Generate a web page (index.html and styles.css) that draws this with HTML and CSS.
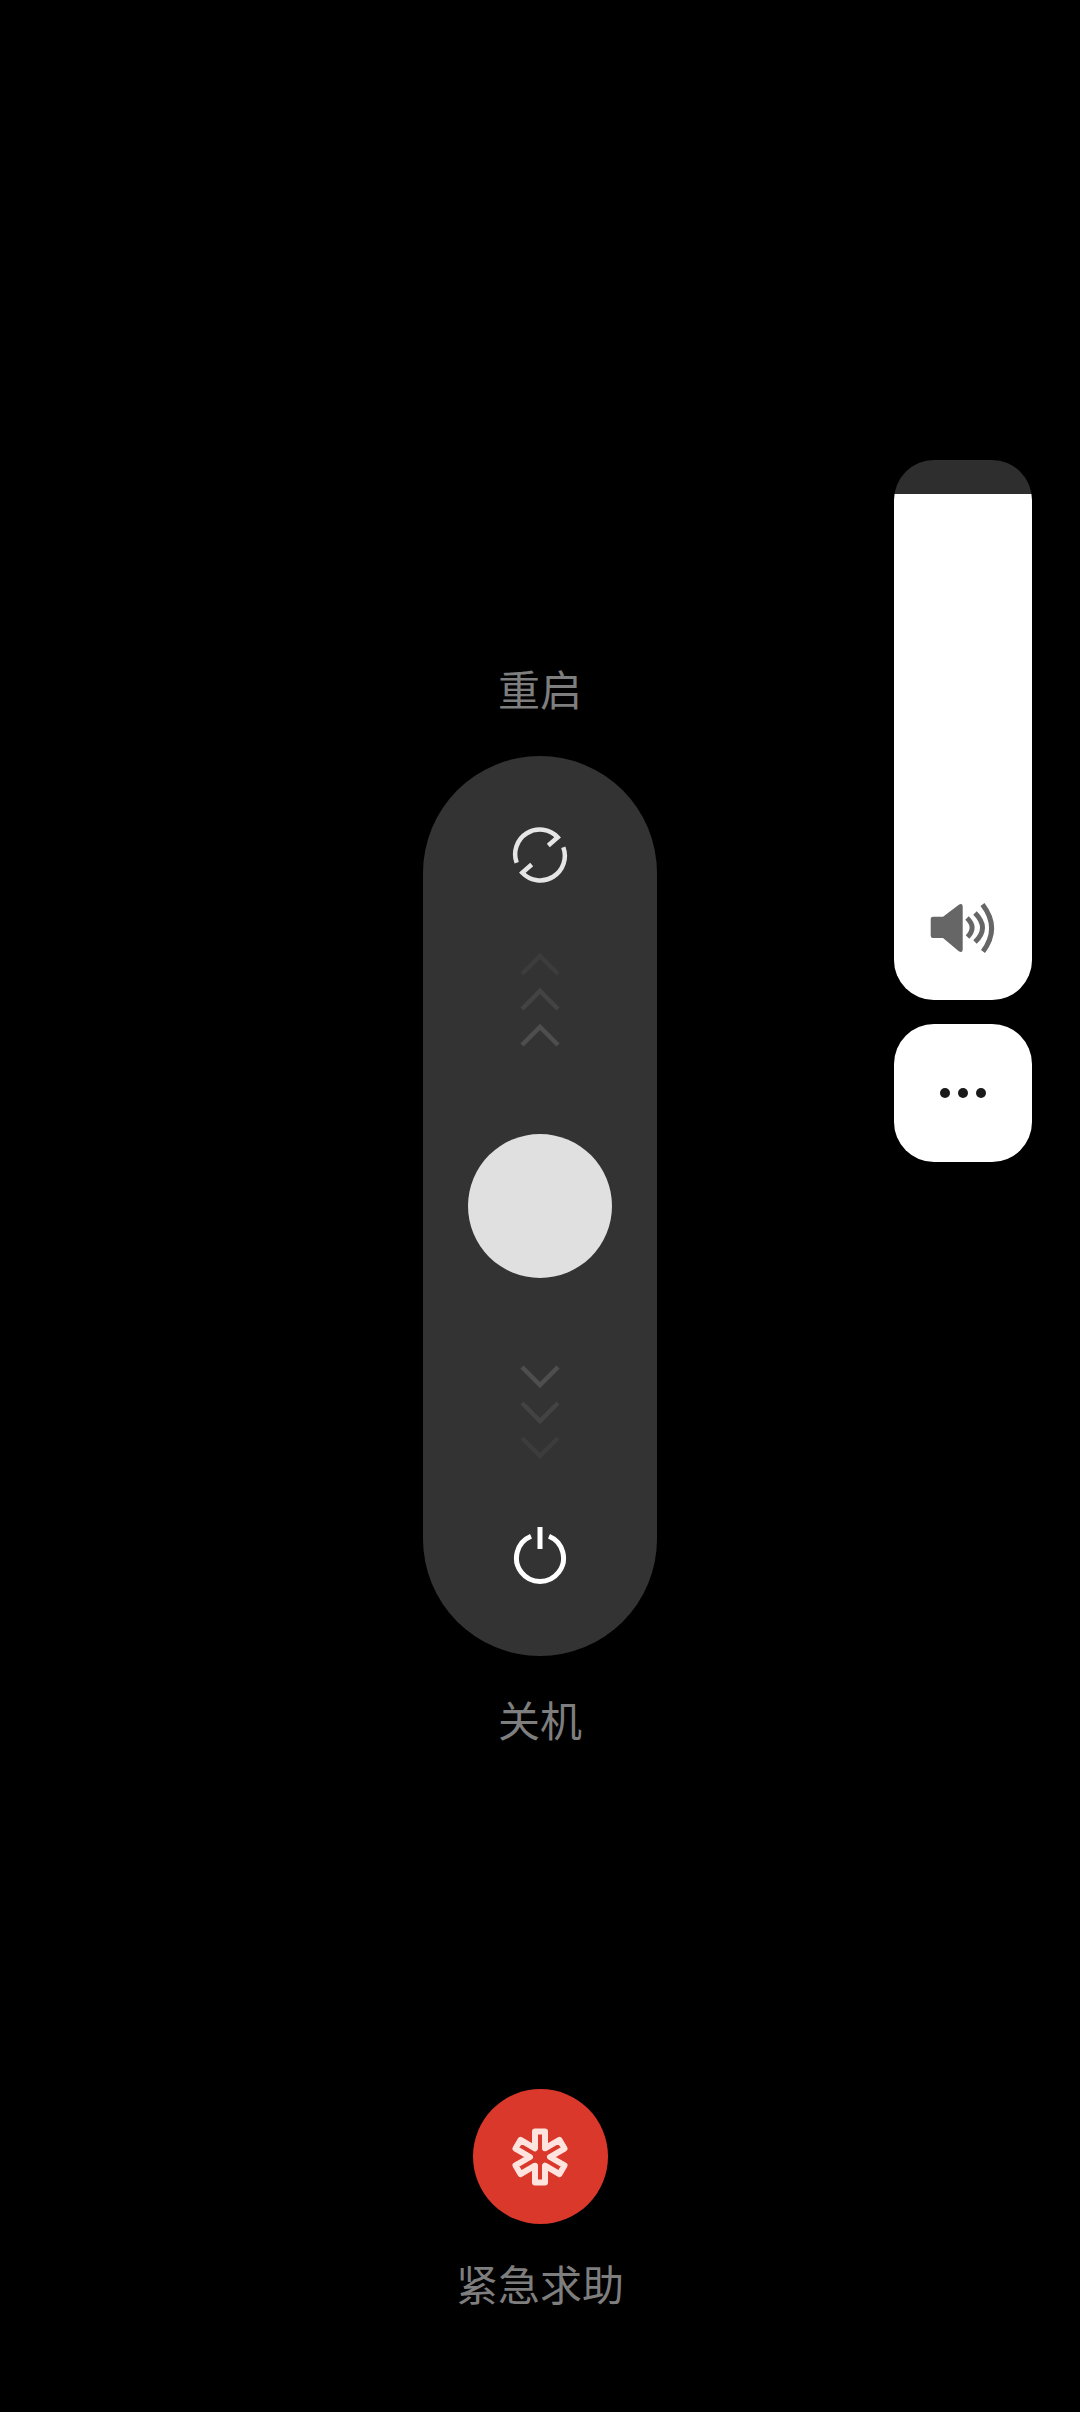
FILE: index.html
```html
<!DOCTYPE html>
<html lang="zh">
<head>
<meta charset="utf-8">
<title>电源菜单</title>
<link rel="stylesheet" href="styles.css">
</head>
<body>
<main class="screen">
  <section class="center">
    <div class="label label-top">重启</div>
    <div class="pill">
      <svg class="icon icon-restart" viewBox="0 0 56 56" width="56" height="56">
        <path class="ring" d="M4.7 35.7A24.600 24.600 0 0 1 45.700 10.300L36.300 18.500"/>
        <path class="ring" d="M51.300 20.300A24.600 24.600 0 0 1 10.300 45.700L19.700 37.500"/>
      </svg>
      <svg class="chevrons chev-up" viewBox="0 0 40 94" width="40" height="94">
        <path class="c1" d="M2 21L20 3L38 21"/>
        <path class="c2" d="M2 56L20 38L38 56"/>
        <path class="c3" d="M2 92L20 74L38 92"/>
      </svg>
      <div class="knob"></div>
      <svg class="chevrons chev-down" viewBox="0 0 40 94" width="40" height="94">
        <path class="c3" d="M2 2L20 20L38 2"/>
        <path class="c2" d="M2 38L20 56L38 38"/>
        <path class="c1" d="M2 73L20 91L38 73"/>
      </svg>
      <svg class="icon icon-power" viewBox="0 0 56 60" width="56" height="60">
        <path class="power" d="M19 10.300A23.500 23.500 0 1 0 37 10.300"/>
        <path class="power" d="M28 1V23"/>
      </svg>
    </div>
    <div class="label label-bottom">关机</div>
    <div class="sos">
      <svg viewBox="0 0 60 64" width="60" height="64">
        <path class="star" d="M25 6.500H35V23.300L49.500 14.900L54.500 23.600L40 32L54.500 40.400L49.500 49.100L35 40.700V57.500H25V40.700L10.500 49.100L5.500 40.400L20 32L5.500 23.600L10.500 14.900L25 23.300Z"/>
      </svg>
    </div>
    <div class="label label-sos">紧急求助</div>
  </section>
  <aside class="side">
    <div class="volume">
      <div class="volume-fill">
        <svg viewBox="0 0 68 54" width="68" height="54">
          <path class="speaker" d="M4 15.700H14L29.500 4Q33.700 1.500 33.700 6V48Q33.700 52.500 29.500 50L14 37H4Q1.700 37 1.700 34.500V18Q1.700 15.700 4 15.700Z"/>
          <path class="wave" d="M38 17Q48 26.500 38.500 36"/>
          <path class="wave" d="M46 12Q61 27 46 41"/>
          <path class="wave" d="M53.500 3.500Q71.500 27 54 50.500"/>
        </svg>
      </div>
    </div>
    <div class="more">
      <span class="dot"></span><span class="dot"></span><span class="dot"></span>
    </div>
  </aside>
</main>
</body>
</html>
```
FILE: styles.css
```css
* { box-sizing: border-box; }
html, body { margin: 0; padding: 0; background: #000; }
.screen {
  width: 1080px;
  height: 2412px;
  display: grid;
  grid-template-columns: 423px 234px 1fr;
  background: #000;
  overflow: hidden;
}
.center {
  grid-column: 2;
  display: flex;
  flex-direction: column;
  align-items: center;
  padding-top: 658px;
}
.label {
  font-family: "Noto Sans CJK SC", "Noto Sans", sans-serif;
  font-weight: 400;
  font-size: 42px;
  line-height: 60px;
  color: #7e7e7e;
  white-space: nowrap;
}
.label-top { margin-bottom: 38px; }
.label-bottom { margin-top: 33px; }
.label-sos { margin-top: 29px; }
.pill {
  width: 234px;
  height: 900px;
  border-radius: 117px;
  background: #333;
  display: flex;
  flex-direction: column;
  align-items: center;
  padding-top: 71px;
}
.icon, .chevrons { display: block; flex: none; }
.ring { fill: none; stroke: #e6e6e6; stroke-width: 4.5; }
.power { fill: none; stroke: #fff; stroke-width: 5; }
.chevrons { fill: none; stroke-width: 4.5; }
.c1 { stroke: #3c3c3c; }
.c2 { stroke: #434343; }
.c3 { stroke: #4e4e4e; }
.chev-up { margin-top: 70px; }
.knob {
  width: 144px;
  height: 144px;
  border-radius: 50%;
  background: #e0e0e0;
  margin-top: 87px;
  flex: none;
}
.chev-down { margin-top: 87px; }
.icon-power { margin-top: 67px; }
.sos {
  width: 135px;
  height: 135px;
  border-radius: 50%;
  background: #da382b;
  margin-top: 340px;
  display: flex;
  align-items: center;
  justify-content: center;
  flex: none;
}
.star { fill: none; stroke: #ffe3df; stroke-width: 6; stroke-linejoin: round; }
.side {
  grid-column: 3;
  display: flex;
  flex-direction: column;
  align-items: flex-end;
  padding: 460px 48px 0 0;
  gap: 24px;
}
.volume {
  width: 138px;
  height: 540px;
  border-radius: 40px;
  background: #2e2e2e;
  overflow: hidden;
  display: flex;
  align-items: flex-end;
}
.volume-fill {
  width: 100%;
  height: 506.5px;
  background: #fff;
  display: flex;
  justify-content: center;
  align-items: flex-end;
  padding: 0 0 45px 0;
}
.speaker { fill: #666; }
.wave { fill: none; stroke: #666; stroke-width: 5; }
.more {
  width: 138px;
  height: 138px;
  border-radius: 40px;
  background: #fff;
  display: flex;
  align-items: center;
  justify-content: center;
  gap: 8px;
}
.dot {
  width: 10px;
  height: 10px;
  border-radius: 50%;
  background: #1a1a1a;
}
```
